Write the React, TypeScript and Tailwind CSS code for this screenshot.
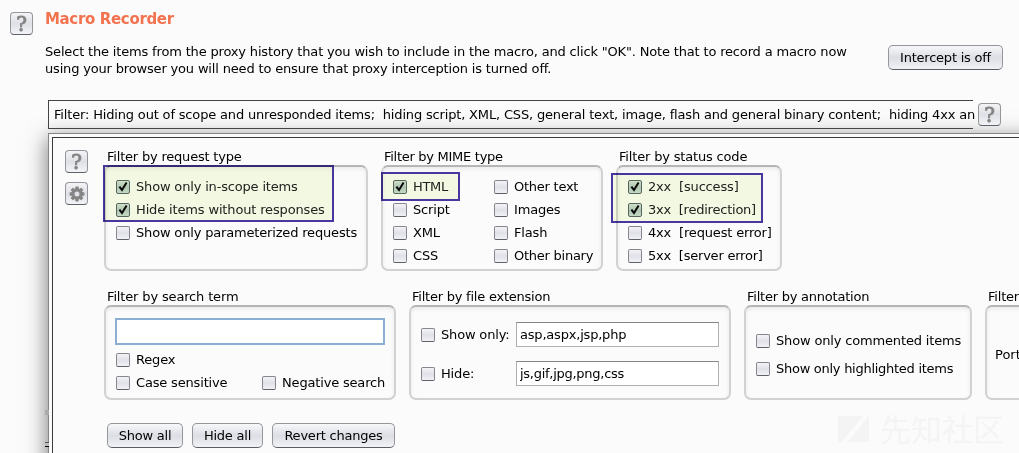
import { ReactNode } from 'react';

function HelpButton() {
  return (
    <button className="flex h-[23px] w-[23px] shrink-0 items-center justify-center rounded-[4px] border border-[#94969c] border-b-[#5f6168] bg-linear-to-b from-[#f4f4f6] via-[#dfe0e6] to-[#f3f4f7] font-['DejaVu_Serif',serif] text-[20px] leading-none text-[#858585] [-webkit-text-stroke:0.9px_#858585]">
      ?
    </button>
  );
}

function GearButton() {
  const teeth = [0, 45, 90, 135, 180, 225, 270, 315];
  return (
    <button className="flex h-[23px] w-[23px] shrink-0 items-center justify-center rounded-[4px] border border-[#94969c] border-b-[#5f6168] bg-linear-to-b from-[#f4f4f6] via-[#dfe0e6] to-[#f3f4f7]">
      <svg width="16" height="16" viewBox="-8 -8 16 16">
        {teeth.map((a) => (
          <rect key={a} x="-1.7" y="-7.4" width="3.4" height="4" rx="0.6" fill="#858585" transform={`rotate(${a})`} />
        ))}
        <circle r="4.1" fill="none" stroke="#858585" strokeWidth="3.2" />
      </svg>
    </button>
  );
}

function Check({ on, children, track = 'tracking-[-0.17px]' }: { on?: boolean; children: ReactNode; track?: string }) {
  return (
    <label className="flex h-[23px] shrink-0 items-center gap-[6px]">
      <span
        className={
          on
            ? 'h-[14px] w-[14px] shrink-0 rounded-[2px] border border-[#5b6668] bg-linear-to-b from-[#d5e2dc] via-[#b5c8c6] to-[#c9dcd8]'
            : 'h-[14px] w-[14px] shrink-0 rounded-[2px] border border-[#85878e] border-b-[#5f6168] bg-linear-to-b from-[#f4f4f7] via-[#e0e0e8] to-[#f1f1f5]'
        }
      >
        {on && (
          <svg width="12" height="12" viewBox="0 0 12 12" className="block">
            <path d="M2.4 5.6 5 9 9.6 1.4" fill="none" stroke="#080808" strokeWidth="2" />
          </svg>
        )}
      </span>
      <span className={`whitespace-pre ${on ? 'text-[#222]' : ''} ${track}`}>{children}</span>
    </label>
  );
}

function Group({ title, track = 'tracking-[-0.2px]', box, children }: { title: string; track?: string; box: string; children?: ReactNode }) {
  return (
    <section className="shrink-0">
      <h2 className={`h-[18px] pt-px pl-[3px] leading-[18px] whitespace-pre ${track}`}>{title}</h2>
      <div
        className={`relative rounded-[7px] border-2 border-[#d2d2d2] border-t-[#b6b6b6] shadow-[inset_0_2px_4px_rgba(0,0,0,0.07)] ${box}`}
      >
        {children}
      </div>
    </section>
  );
}

function Mark({ place }: { place: string }) {
  return <div className={`pointer-events-none absolute border-2 border-[#4a38a2] bg-[#f7fce6] mix-blend-multiply ${place}`} />;
}

function PushButton({ children, size, track = 'tracking-[-0.22px]' }: { children: string; size: string; track?: string }) {
  return (
    <button
      className={`flex h-[25px] shrink-0 items-center justify-center rounded-[5px] border border-[#94969c] border-b-[#5b5d64] bg-linear-to-b from-[#f8f8f9] via-[#dcdee5] to-[#f1f2f5] whitespace-pre ${size} ${track}`}
    >
      {children}
    </button>
  );
}

export default function App() {
  return (
    <main className="relative h-[453px] w-[1019px] overflow-hidden bg-[#fbfbfb] font-['DejaVu_Sans',sans-serif] text-[13px] text-black">
      <header className="flex h-[100px] pl-[10px]">
        <div className="pt-[12px]">
          <HelpButton />
        </div>
        <div className="w-[855px] pl-[12px]">
          <h1 className="mt-[8px] h-[22px] text-[15px] leading-[22px] font-bold tracking-[-0.34px] text-[#f27350]">Macro Recorder</h1>
          <p className="mt-[13px] leading-[17px] tracking-[-0.168px] whitespace-pre">
            {'Select the items from the proxy history that you wish to include in the macro, and click "OK". Note that to record a macro now\nusing your browser you will need to ensure that proxy interception is turned off.'}
          </p>
        </div>
        <div className="pt-[45px]">
          <PushButton size="w-[115px]">Intercept is off</PushButton>
        </div>
      </header>

      <div className="flex h-[33px] items-start pl-[48px]">
        <div className="h-[29px] w-[927px] overflow-hidden bg-[linear-gradient(#454348,#454348),linear-gradient(#454348,#454348)] bg-[length:925px_1px] bg-[position:0_0,0_28px] bg-no-repeat">
          <div className="h-[29px] border-l border-[#454348] pl-[5px] leading-[29px] tracking-[-0.167px] whitespace-pre">
            Filter: Hiding out of scope and unresponded items;{'  '}hiding script, XML, CSS, general text, image, flash and general binary content;{'  '}hiding 4xx and
          </div>
        </div>
        <div className="pt-[3px] pl-[3px]">
          <HelpButton />
        </div>
      </div>

      <div className="ml-[48px] h-[340px] w-[1000px] border border-[#858585] bg-[#fbfbfb] pt-[3px] pl-[3px] shadow-[0_6px_20px_1px_rgba(0,0,0,0.5)]">
        <div className="flex h-[340px] border border-[#3a3a3e] pt-[9px]">
          <div className="flex w-[51px] shrink-0 flex-col gap-[9px] pt-[3px] pl-[12px]">
            <HelpButton />
            <GearButton />
          </div>
          <div>
            <div className="flex gap-[13px]">
              <Group title="Filter by request type" box="h-[106px] w-[264px] pt-[8px] pl-[10px]">
                <Check on>Show only in-scope items</Check>
                <Check on track="tracking-[-0.15px]">Hide items without responses</Check>
                <Check>Show only parameterized requests</Check>
                <Mark place="-top-[2px] -left-[3px] h-[57px] w-[231px]" />
              </Group>
              <Group title="Filter by MIME type" track="tracking-[-0.28px]" box="flex h-[106px] w-[222px] pt-[8px] pl-[10px]">
                <div className="w-[101px]">
                  <Check on track="tracking-[-0.3px]">HTML</Check>
                  <Check>Script</Check>
                  <Check>XML</Check>
                  <Check>CSS</Check>
                </div>
                <div>
                  <Check track="tracking-[-0.25px]">Other text</Check>
                  <Check>Images</Check>
                  <Check>Flash</Check>
                  <Check track="tracking-[-0.25px]">Other binary</Check>
                </div>
                <Mark place="top-[5px] -left-[2px] h-[29px] w-[79px]" />
              </Group>
              <Group title="Filter by status code" track="tracking-[-0.17px]" box="h-[106px] w-[166px] pt-[8px] pl-[10px]">
                <Check on>2xx  [success]</Check>
                <Check on track="tracking-[-0.23px]">3xx  [redirection]</Check>
                <Check>4xx  [request error]</Check>
                <Check track="tracking-[-0.22px]">5xx  [server error]</Check>
                <Mark place="top-[6px] -left-[7px] h-[50px] w-[152px]" />
              </Group>
            </div>

            <div className="mt-[16px] flex gap-[13px]">
              <Group title="Filter by search term" track="tracking-[-0.15px]" box="h-[95px] w-[292px] pt-[11px] pl-[9px]">
                <input className="block h-[27px] w-[270px] border-2 border-[#8caed4] bg-white outline-none" />
                <div className="pt-[3px] pl-px">
                  <Check>Regex</Check>
                  <div className="flex">
                    <div className="w-[146px]">
                      <Check>Case sensitive</Check>
                    </div>
                    <Check>Negative search</Check>
                  </div>
                </div>
              </Group>
              <Group title="Filter by file extension" track="tracking-[-0.23px]" box="flex h-[95px] w-[322px] flex-col gap-[14px] pt-[15px] pl-[10px]">
                <div className="flex h-[25px] items-center">
                  <div className="w-[95px]">
                    <Check>Show only:</Check>
                  </div>
                  <input defaultValue="asp,aspx,jsp,php" className="h-[25px] w-[203px] border border-[#b0b0b0] border-t-[#858585] bg-white px-[3px] tracking-[-0.2px] outline-none" />
                </div>
                <div className="flex h-[25px] items-center">
                  <div className="w-[95px]">
                    <Check>Hide:</Check>
                  </div>
                  <input defaultValue="js,gif,jpg,png,css" className="h-[25px] w-[203px] border border-[#b0b0b0] border-t-[#858585] bg-white px-[3px] tracking-[-0.27px] outline-none" />
                </div>
              </Group>
              <Group title="Filter by annotation" track="tracking-[-0.23px]" box="flex h-[95px] w-[228px] flex-col gap-[5px] pt-[22px] pl-[10px]">
                <Check track="tracking-[-0.16px]">Show only commented items</Check>
                <Check track="tracking-[-0.27px]">Show only highlighted items</Check>
              </Group>
              <Group title="Filter by listener" box="h-[95px] w-[160px] pt-[38px] pl-[8px]">
                Port
              </Group>
            </div>

            <div className="mt-[23px] flex gap-[9px] pl-[3px]">
              <PushButton size="w-[76px]">Show all</PushButton>
              <PushButton size="w-[71px]">Hide all</PushButton>
              <PushButton size="w-[123px]">Revert changes</PushButton>
            </div>
          </div>
        </div>
      </div>

      <div className="absolute top-[411px] left-[838px] flex items-center gap-[10px] text-[#f4f4f4]">
        <svg width="32" height="32" viewBox="0 0 32 32">
          <path d="M0 4H25L3 31H0Z M31 3V30H10Z" fill="currentColor" />
        </svg>
        <span className="font-['Noto_Sans_CJK_SC',sans-serif] text-[31px] leading-[34px]">先知社区</span>
      </div>
      <div className="absolute top-[410px] left-[45px] h-[5px] w-[4px] bg-[#aaa]" />
      <div className="absolute top-[442px] left-[45px] h-[5px] w-[4px] border-y border-t-[#555] border-b-black bg-[#bbb]" />
    </main>
  );
}
